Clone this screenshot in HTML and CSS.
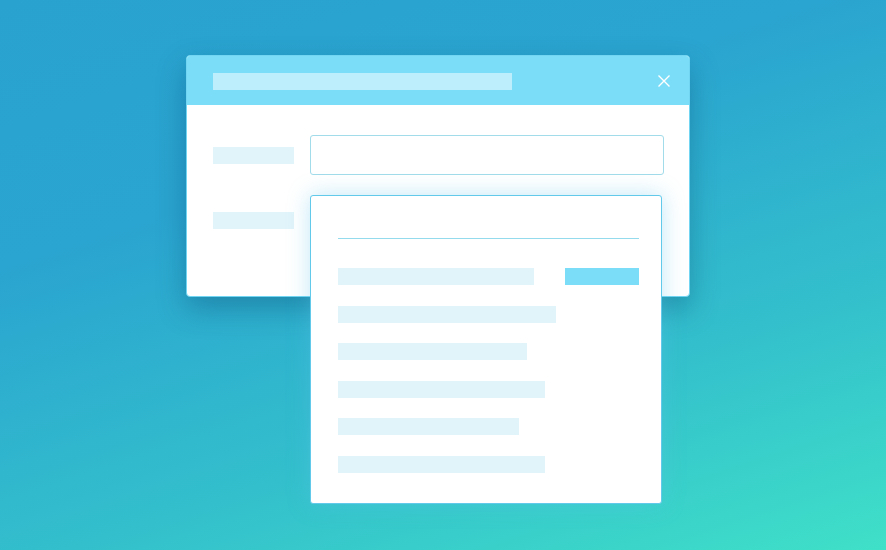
FILE: index.html
```html
<!DOCTYPE html>
<html>
<head>
<meta charset="utf-8">
<link rel="stylesheet" href="styles.css">
</head>
<body>
<div class="stage">
  <div class="dialog">
    <div class="dialog-header">
      <div class="title-bar"></div>
      <svg class="close" width="12" height="12" viewBox="0 0 12 12"><path d="M0.5 0.5 L11.5 11.5 M11.5 0.5 L0.5 11.5" stroke="#ffffff" stroke-width="1.4" fill="none"/></svg>
    </div>
    <div class="dialog-body">
      <div class="form-row">
        <div class="label"></div>
        <div class="input"></div>
      </div>
      <div class="form-row">
        <div class="label"></div>
        <div class="input-ghost"></div>
      </div>
    </div>
    <div class="dropdown">
      <div class="divider"></div>
      <div class="options">
        <div class="option first">
          <div class="bar" style="width:196px"></div>
          <div class="btn"></div>
        </div>
        <div class="option"><div class="bar" style="width:218px"></div></div>
        <div class="option"><div class="bar" style="width:189px"></div></div>
        <div class="option"><div class="bar" style="width:207px"></div></div>
        <div class="option"><div class="bar" style="width:181px"></div></div>
        <div class="option"><div class="bar" style="width:207px"></div></div>
      </div>
    </div>
  </div>
</div>
</body>
</html>
```
FILE: styles.css
```css
html, body {
  margin: 0;
  padding: 0;
}
body {
  width: 886px;
  height: 550px;
  overflow: hidden;
  font-family: "Liberation Sans", Arial, sans-serif;
  background: linear-gradient(162deg, #29a2cf 0%, #2aa4d0 32%, #33bfcc 68%, #3fe0c8 100%);
}
.stage {
  padding: 55px 0 0 186px;
}
.dialog {
  position: relative;
  box-sizing: border-box;
  width: 504px;
  height: 242px;
  background: #ffffff;
  border: 1px solid #72d5f1;
  border-radius: 4px;
  box-shadow: 0 12px 28px rgba(10, 70, 110, 0.35);
}
.dialog-header {
  display: flex;
  align-items: flex-start;
  height: 49px;
  box-sizing: border-box;
  padding: 17px 19px 0 26px;
  background: #7bddf7;
  border-radius: 3px 3px 0 0;
}
.title-bar {
  width: 299px;
  height: 17px;
  background: #bdeefb;
}
.close {
  margin-left: auto;
  margin-top: 2px;
  display: block;
}
.dialog-body {
  padding: 30px 25px 0 26px;
  display: flex;
  flex-direction: column;
  gap: 25px;
}
.form-row {
  display: flex;
  align-items: center;
  gap: 16px;
}
.label {
  width: 81px;
  height: 17px;
  background: #e1f4fa;
}
.input {
  box-sizing: border-box;
  width: 354px;
  height: 40px;
  border: 1px solid #a2dbea;
  border-radius: 3px;
}
.input-ghost {
  width: 354px;
  height: 40px;
}
.dropdown {
  position: absolute;
  left: 123px;
  top: 139px;
  box-sizing: border-box;
  width: 352px;
  height: 309px;
  padding: 42px 22px 0 27px;
  background: #ffffff;
  border: 1px solid #62c9ea;
  border-radius: 3px;
  box-shadow: 0 0 22px rgba(90, 195, 235, 0.38);
}
.divider {
  height: 1px;
  background: #94dbee;
}
.options {
  margin-top: 29px;
  display: flex;
  flex-direction: column;
  gap: 20.6px;
}
.option {
  display: flex;
  justify-content: space-between;
  height: 17px;
}
.bar {
  height: 17px;
  background: #e1f4fa;
}
.btn {
  width: 74px;
  height: 17px;
  background: #7bddf7;
}
```
